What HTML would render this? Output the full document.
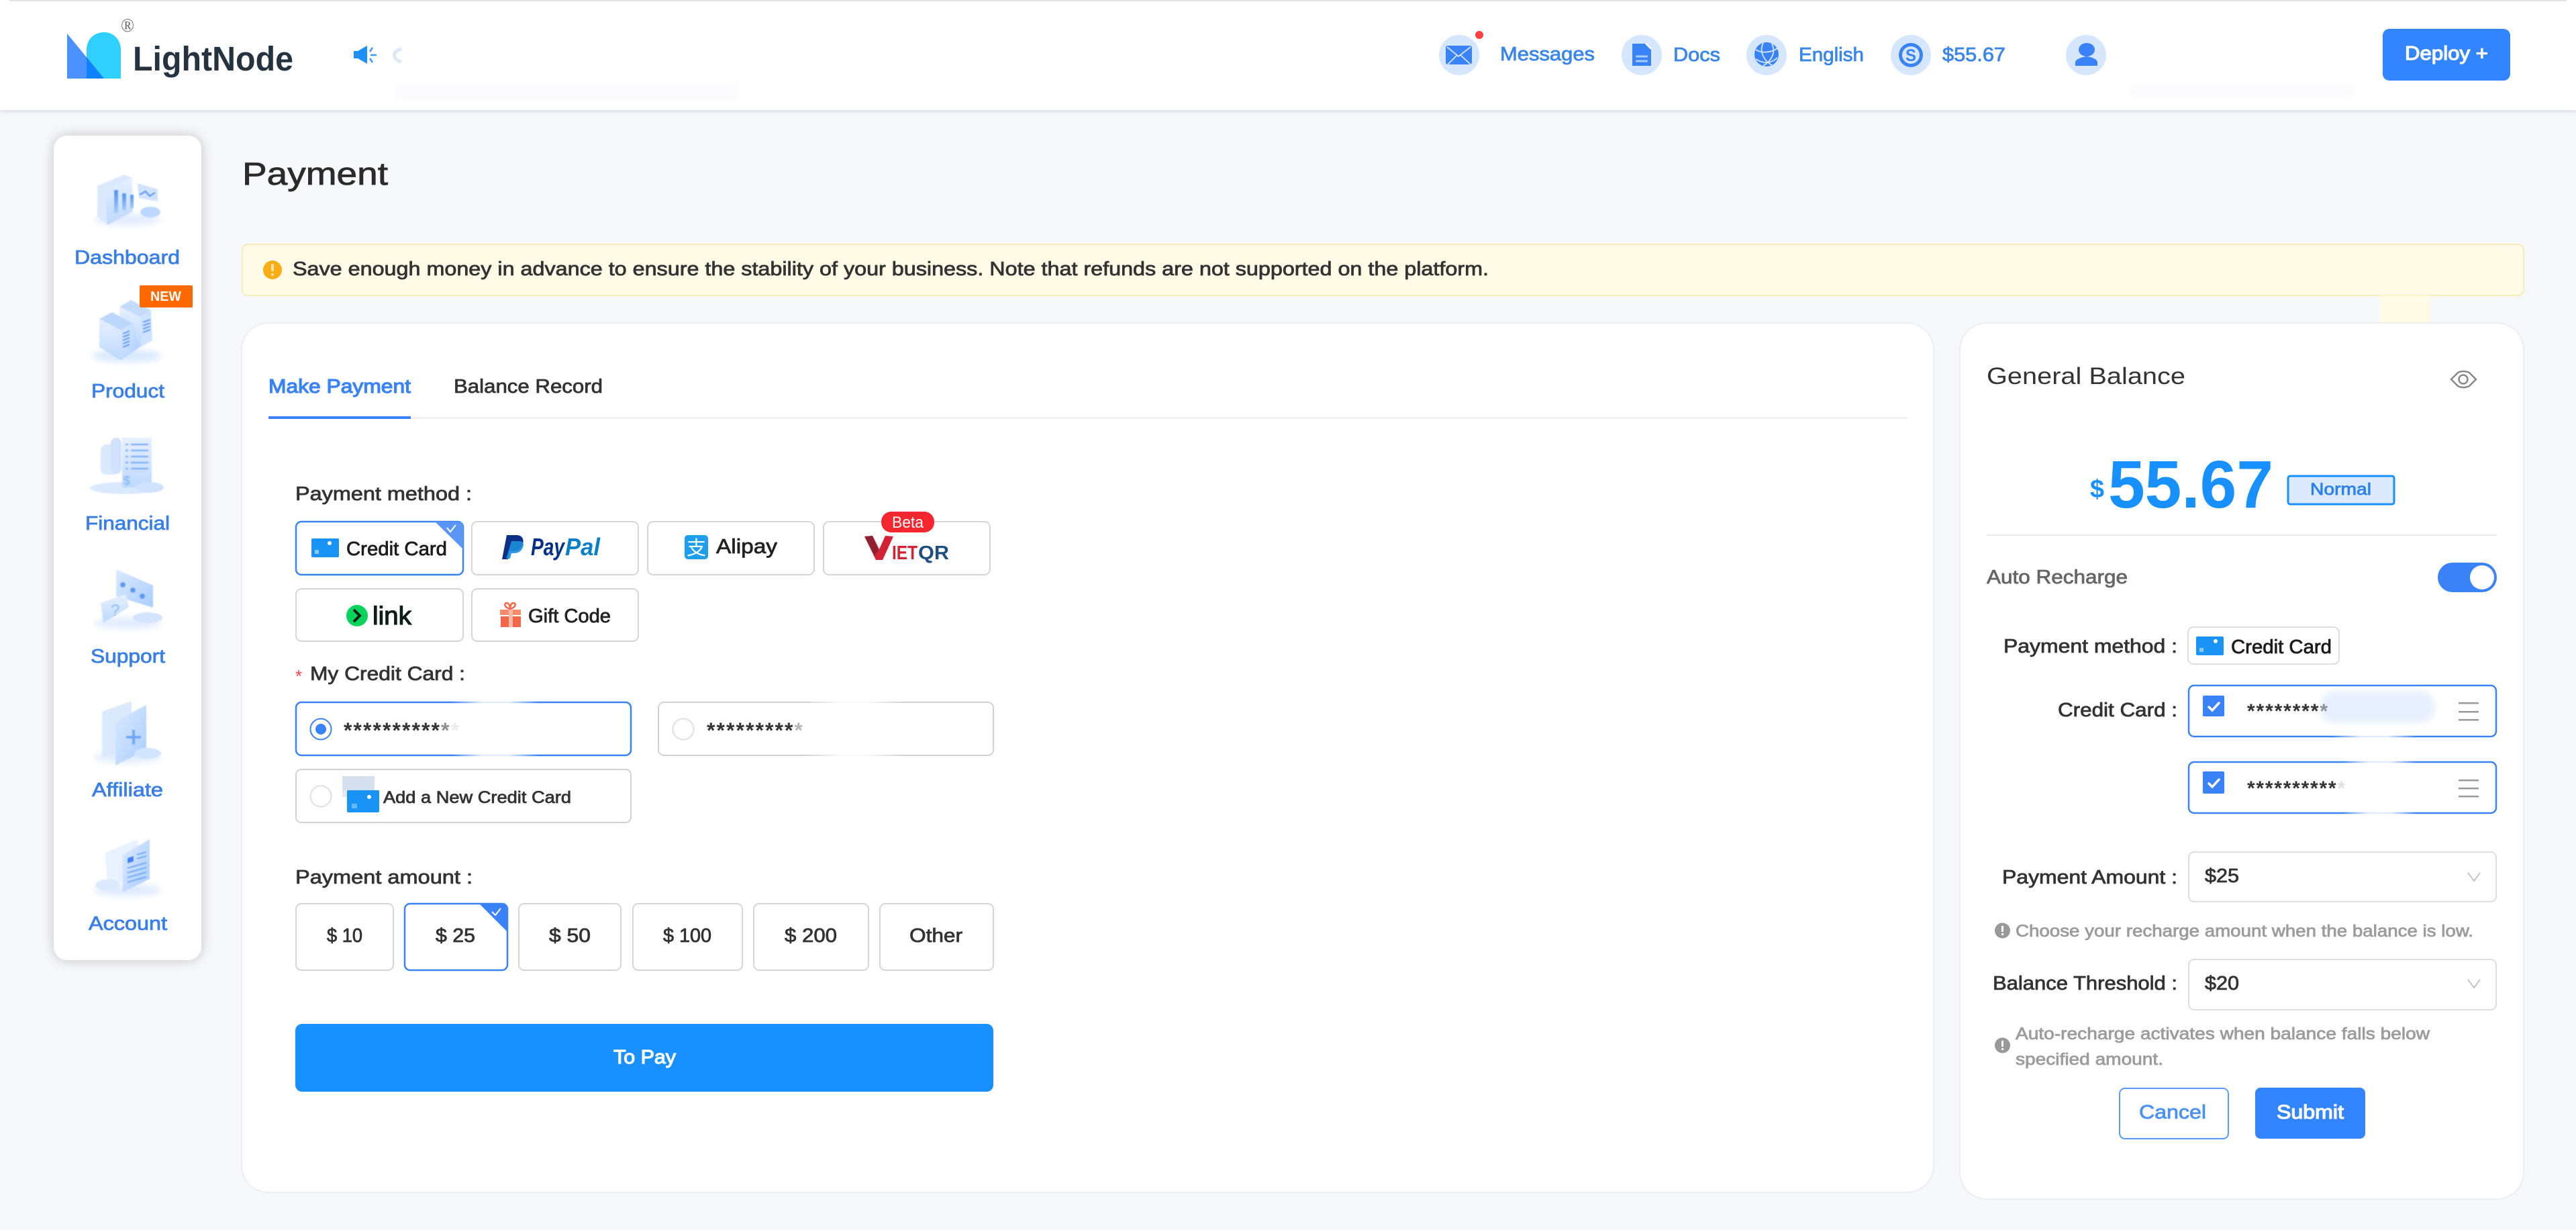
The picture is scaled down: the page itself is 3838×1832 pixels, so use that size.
<!DOCTYPE html>
<html lang="en">
<head>
<meta charset="utf-8">
<title>LightNode Payment</title>
<style>
html,body{margin:0;padding:0;width:3838px;height:1832px;overflow:hidden;background:#f7f8fc}
svg{display:block}
text{font-family:"Liberation Sans","Noto Sans CJK SC",sans-serif}
.m{stroke:currentColor;stroke-width:.8px}
.s{stroke:currentColor;stroke-width:1.2px}
.st{font-weight:700;font-size:32px;fill:#333}
.st2{font-weight:700;font-size:30px;fill:#333}
</style>
</head>
<body>
<svg xmlns="http://www.w3.org/2000/svg" width="3838" height="1832" viewBox="0 0 3838 1832">
<defs>
<linearGradient id="g1" x1="0" y1="0" x2="0" y2="1"><stop offset="0" stop-color="#e6f0ff"/><stop offset="1" stop-color="#bdd8ff"/></linearGradient>
<linearGradient id="g2" x1="0" y1="0" x2="1" y2="1"><stop offset="0" stop-color="#dbeaff"/><stop offset="1" stop-color="#a9cdfe"/></linearGradient>
<linearGradient id="g3" x1="0" y1="0" x2="0" y2="1"><stop offset="0" stop-color="#c2dafd"/><stop offset="1" stop-color="#e9f2ff"/></linearGradient>
<linearGradient id="g4" x1="0" y1="0" x2="0" y2="1"><stop offset="0" stop-color="#4f92f2"/><stop offset="1" stop-color="#a6cbfb"/></linearGradient>
<linearGradient id="mid" x1="0" y1="0" x2="1" y2="0"><stop offset="0" stop-color="#fff" stop-opacity="0"/><stop offset=".35" stop-color="#fff" stop-opacity=".85"/><stop offset=".65" stop-color="#fff" stop-opacity=".85"/><stop offset="1" stop-color="#fff" stop-opacity="0"/></linearGradient>
<filter id="b1" x="-20%" y="-20%" width="140%" height="140%"><feGaussianBlur stdDeviation=".9"/></filter>
<filter id="b5" x="-40%" y="-60%" width="180%" height="220%"><feGaussianBlur stdDeviation="5"/></filter>
<filter id="b8" x="-30%" y="-60%" width="160%" height="220%"><feGaussianBlur stdDeviation="8"/></filter>
<filter id="side" x="-30%" y="-10%" width="160%" height="120%"><feDropShadow dx="0" dy="0" stdDeviation="9" flood-color="#000" flood-opacity=".22"/></filter>
<filter id="hd" x="-2%" y="-10%" width="104%" height="130%"><feDropShadow dx="0" dy="2" stdDeviation="3" flood-color="#9498aa" flood-opacity=".35"/></filter>
</defs>

<rect width="3838" height="1832" fill="#f7f8fc"/>

<!-- header -->
<rect x="0" y="0" width="3838" height="164" fill="#fff" filter="url(#hd)"/>
<rect x="14" y="0" width="3810" height="2" fill="#e4e4e8"/>
<rect x="590" y="124" width="510" height="26" fill="#fbfbfd" filter="url(#b5)"/>
<rect x="3175" y="124" width="330" height="20" fill="#fbfbfd" filter="url(#b5)"/>

<!-- logo -->
<path d="M100 50 L100 117 L155 117 Z" fill="#4b91ff"/>
<path d="M129 85 L129 74 C129 58 141 48 155 48 C170 48 180 60 180 74 L180 117 L155 117 Z" fill="#2fd0ff"/>
<path d="M129 85 L155 117 L129 117 Z" fill="#0f82ff"/>
<text x="180" y="47" font-size="28" fill="#6a6a6a" style="font-family:'Liberation Serif',serif" textLength="20" lengthAdjust="spacingAndGlyphs">®</text>
<text x="198" y="105" font-size="51" font-weight="700" fill="#25323f" textLength="239" lengthAdjust="spacingAndGlyphs">LightNode</text>

<!-- speaker -->
<path d="M527 76 h6 l14 -8 v27 l-14 -8 h-6 z" fill="#1e8fff"/>
<path d="M551 77 l4 -6 M552 82 h9 M551 87 l4 6" stroke="#3a96f5" stroke-width="2.5" fill="none"/>
<path d="M598 73 C584 76 584 89 598 92" stroke="#dbe8f7" stroke-width="5" fill="none"/>

<!-- top nav -->
<circle cx="2174" cy="82" r="30" fill="#d6e6fc"/>
<rect x="2154" y="68" width="39" height="28" rx="3" fill="#3a82f7"/>
<path d="M2156 70 L2173 84 L2191 70 M2157 96 L2171 82 M2191 96 L2176 82" stroke="#d6e6fc" stroke-width="1.8" fill="none"/>
<circle cx="2204" cy="52" r="6" fill="#ff4040"/>
<text x="2235" y="90" font-size="29" fill="#3a86ea" class="m" style="color:#3a86ea" textLength="141" lengthAdjust="spacingAndGlyphs">Messages</text>

<circle cx="2446" cy="82" r="30" fill="#d6e6fc"/>
<path d="M2432 65 h19 l9 9 v24 h-28 z" fill="#3a82f7"/>
<path d="M2452 65 l8 8" stroke="#fff" stroke-width="2"/>
<path d="M2437 84 h18 M2437 91 h18" stroke="#a8c9fb" stroke-width="3"/>
<text x="2493" y="91" font-size="29" fill="#3a86ea" class="m" style="color:#3a86ea" textLength="70" lengthAdjust="spacingAndGlyphs">Docs</text>

<circle cx="2632" cy="82" r="30" fill="#d6e6fc"/>
<circle cx="2632" cy="81" r="18" fill="#3a82f7"/>
<path d="M2616 74 C2625 80 2640 78 2648 72 M2616 88 C2628 96 2640 94 2648 86 M2627 64 C2620 78 2630 92 2640 97 M2640 65 C2646 78 2640 90 2627 98" stroke="#d6e6fc" stroke-width="1.8" fill="none"/>
<text x="2680" y="91" font-size="29" fill="#3a86ea" class="m" style="color:#3a86ea" textLength="97" lengthAdjust="spacingAndGlyphs">English</text>

<circle cx="2847" cy="82" r="30" fill="#d6e6fc"/>
<circle cx="2847" cy="82" r="18" fill="#3a82f7"/>
<circle cx="2847" cy="82" r="13" fill="#d6e6fc"/>
<text x="2839" y="91" font-size="25" font-weight="700" fill="#3a82f7" textLength="16" lengthAdjust="spacingAndGlyphs">S</text>
<text x="2894" y="91" font-size="29" fill="#3a86ea" class="m" style="color:#3a86ea" textLength="94" lengthAdjust="spacingAndGlyphs">$55.67</text>

<circle cx="3108" cy="82" r="30" fill="#d6e6fc"/>
<ellipse cx="3109" cy="74" rx="12" ry="10" fill="#3a82f7"/>
<path d="M3092 98 v-5 c0 -5 10 -8 17 -9 c7 1 16 4 16 9 v5 z" fill="#3a82f7"/>

<rect x="3550" y="43" width="190" height="77" rx="10" fill="#3385ff"/>
<text x="3583" y="89" font-size="29" fill="#fff" class="s" style="color:#fff" textLength="124" lengthAdjust="spacingAndGlyphs">Deploy +</text>

<!-- sidebar -->
<rect x="80" y="202" width="220" height="1228" rx="20" fill="#fff" filter="url(#side)"/>

<!-- dashboard icon -->
<g filter="url(#b1)">
<ellipse cx="190" cy="327" rx="50" ry="8" fill="#dfebff" filter="url(#b5)"/>
<path d="M145 277 L185 260 L197 265 L197 315 L160 335 L145 323 Z" fill="#dbe9fd"/>
<path d="M157 283 L197 265 L198 315 L160 335 Z" fill="url(#g1)"/>
<path d="M173 283 v34" stroke="url(#g4)" stroke-width="6"/>
<rect x="170" y="283" width="6" height="34" fill="url(#g4)"/>
<rect x="182" y="288" width="6" height="25" fill="url(#g4)"/>
<rect x="194" y="290" width="5" height="20" fill="url(#g4)"/>
<path d="M205 273 L235 282 L235 300 L207 295 Z" fill="#d0e3ff"/>
<path d="M208 290 l9 -5 l6 7 l8 -5" stroke="#5b9bf2" stroke-width="2.5" fill="none"/>
<ellipse cx="224" cy="316" rx="15" ry="8" fill="#bcd8ff"/>
</g>
<text x="111" y="393" font-size="29" fill="#3a7fe8" class="m" style="color:#3a7fe8" textLength="157" lengthAdjust="spacingAndGlyphs">Dashboard</text>

<!-- product icon -->
<g filter="url(#b1)">
<ellipse cx="189" cy="530" rx="52" ry="9" fill="#d6e7ff" filter="url(#b5)"/>
<path d="M178 457 L195 447 L225 462 L210 472 Z" fill="#c4dbfc"/>
<path d="M210 472 L225 462 L227 507 L210 517 Z" fill="#cfe2ff"/>
<path d="M178 457 L210 472 L210 517 L178 510 Z" fill="url(#g1)"/>
<path d="M148 475 L167 465 L198 482 L180 492 Z" fill="#bcd7fb"/>
<path d="M148 475 L180 492 L180 537 L148 517 Z" fill="url(#g1)"/>
<path d="M180 492 L198 482 L208 517 L180 537 Z" fill="url(#g2)"/>
<path d="M183 497 l10 -4 M183 502 l10 -4 M183 507 l10 -4 M183 512 l10 -4 M183 517 l10 -4" stroke="#5b9bf2" stroke-width="2.2"/>
<path d="M213 480 l11 -4 M213 485 l11 -4 M213 490 l11 -4 M213 495 l11 -4" stroke="#5b9bf2" stroke-width="2.2"/>
</g>
<rect x="208" y="425" width="79" height="33" rx="2" fill="#ff6a00"/>
<text x="224" y="448" font-size="20" font-weight="700" fill="#fff" textLength="46" lengthAdjust="spacingAndGlyphs">NEW</text>
<text x="136" y="592" font-size="29" fill="#3a7fe8" class="m" style="color:#3a7fe8" textLength="109" lengthAdjust="spacingAndGlyphs">Product</text>

<!-- financial icon -->
<g filter="url(#b1)">
<ellipse cx="186" cy="727" rx="52" ry="9" fill="#dbe9ff"/>
<rect x="150" y="662" width="27" height="45" rx="8" fill="#dbe9fd"/>
<rect x="165" y="652" width="16" height="54" rx="8" fill="#cfe1fb"/>
<rect x="182" y="652" width="44" height="74" fill="url(#g1)"/>
<path d="M187 662 h4 M195 662 h26 M187 671 h4 M195 671 h26 M187 680 h4 M195 680 h26 M187 689 h4 M195 689 h26 M187 698 h4 M195 698 h26" stroke="#7db2f7" stroke-width="2.5"/>
<text x="184" y="722" font-size="18" font-weight="700" fill="#8ab9f7">$</text>
<ellipse cx="222" cy="726" rx="22" ry="8" fill="#cfe2ff"/>
</g>
<text x="127" y="789" font-size="29" fill="#3a7fe8" class="m" style="color:#3a7fe8" textLength="126" lengthAdjust="spacingAndGlyphs">Financial</text>

<!-- support icon -->
<g filter="url(#b1)">
<ellipse cx="190" cy="928" rx="50" ry="8" fill="#dfebff" filter="url(#b5)"/>
<path d="M173 848 L228 872 L228 905 L173 888 Z" fill="url(#g2)"/>
<circle cx="183" cy="871" r="4" fill="#5b9bf2"/><circle cx="198" cy="879" r="4" fill="#5b9bf2"/><circle cx="212" cy="888" r="4" fill="#5b9bf2"/>
<path d="M150 898 L187 885 L192 904 L154 928 Z" fill="url(#g1)"/>
<text x="165" y="917" font-size="24" fill="#8ab9f7">?</text>
<ellipse cx="220" cy="920" rx="22" ry="8" fill="#d3e4ff"/>
</g>
<text x="135" y="987" font-size="29" fill="#3a7fe8" class="m" style="color:#3a7fe8" textLength="111" lengthAdjust="spacingAndGlyphs">Support</text>

<!-- affiliate icon -->
<g filter="url(#b1)">
<ellipse cx="190" cy="1128" rx="50" ry="8" fill="#dfebff" filter="url(#b5)"/>
<path d="M152 1060 L196 1044 L196 1123 L152 1127 Z" fill="#dbe9fd"/>
<path d="M172 1074 L218 1050 L218 1117 L172 1140 Z" fill="url(#g2)"/>
<path d="M188 1098 h22 M199 1087 v22" stroke="#6da8f6" stroke-width="4"/>
<ellipse cx="220" cy="1122" rx="20" ry="8" fill="#d3e4ff"/>
</g>
<text x="137" y="1186" font-size="29" fill="#3a7fe8" class="m" style="color:#3a7fe8" textLength="106" lengthAdjust="spacingAndGlyphs">Affiliate</text>

<!-- account icon -->
<g filter="url(#b1)">
<ellipse cx="190" cy="1326" rx="50" ry="8" fill="#dbe9ff" filter="url(#b5)"/>
<path d="M157 1270 L205 1250 L205 1310 L160 1318 Z" fill="#e8f1ff"/>
<ellipse cx="160" cy="1318" rx="18" ry="8" fill="#dbe9ff"/>
<path d="M183 1273 L223 1250 L223 1309 L183 1329 Z" fill="url(#g2)"/>
<path d="M190 1278 l9 -3 v8 l-9 3 z" fill="#3a82f7"/>
<path d="M204 1273 l14 -4 M204 1279 l14 -4 M190 1293 l28 -8 M190 1300 l28 -8 M190 1307 l28 -8 M190 1314 l28 -8" stroke="#6da8f6" stroke-width="2"/>
</g>
<text x="132" y="1385" font-size="29" fill="#3a7fe8" class="m" style="color:#3a7fe8" textLength="117" lengthAdjust="spacingAndGlyphs">Account</text>

<!-- title -->
<text x="361" y="275" font-size="47" fill="#2b2b2b" class="m" style="color:#2b2b2b" textLength="217" lengthAdjust="spacingAndGlyphs">Payment</text>

<!-- notice -->
<rect x="361" y="364" width="3399" height="76" rx="8" fill="#fffbe6" stroke="#f7ecb8" stroke-width="2"/>
<circle cx="406" cy="402" r="14" fill="#faad14"/>
<rect x="404" y="393" width="4" height="11" rx="1" fill="#ffe3a6"/><circle cx="406" cy="409" r="2" fill="#ffe3a6"/>
<text x="436" y="410" font-size="29" fill="#333" class="m" style="color:#333" textLength="1782" lengthAdjust="spacingAndGlyphs">Save enough money in advance to ensure the stability of your business. Note that refunds are not supported on the platform.</text>

<!-- left card -->
<rect x="360" y="481" width="2521" height="1295" rx="40" fill="#fff" stroke="#eceef2" stroke-width="2"/>
<text x="400" y="585" font-size="29" fill="#3a82f7" class="s" style="color:#3a82f7" textLength="212" lengthAdjust="spacingAndGlyphs">Make Payment</text>
<text x="676" y="585" font-size="29" fill="#333" class="m" style="color:#333" textLength="222" lengthAdjust="spacingAndGlyphs">Balance Record</text>
<rect x="612" y="621" width="2230" height="3" fill="#f1f1f3"/>
<rect x="400" y="620" width="212" height="4" fill="#3a82f7"/>

<text x="440" y="745" font-size="29" fill="#333" class="m" style="color:#333" textLength="263" lengthAdjust="spacingAndGlyphs">Payment method :</text>

<!-- payment buttons -->
<rect x="441" y="777" width="249" height="79" rx="8" fill="#fff" stroke="#3a82f7" stroke-width="2.5"/>
<path d="M648 777 L682 777 Q690 777 690 785 L690 818 Z" fill="#5b95f6"/>
<path d="M666 786 l5 6 l8 -10" stroke="#fff" stroke-width="2" fill="none"/>
<rect x="464" y="802" width="41" height="28" rx="2" fill="#1a93f7"/>
<circle cx="491" cy="809" r="3" fill="#fff"/><rect x="469" y="819" width="6" height="6" fill="#8cc8fb"/>
<text x="516" y="827" font-size="29" fill="#1c1c1c" class="m" style="color:#1c1c1c" textLength="150" lengthAdjust="spacingAndGlyphs">Credit Card</text>

<rect x="703" y="777" width="248" height="79" rx="8" fill="#fff" stroke="#d6d6d6" stroke-width="2"/>
<path d="M755 797 h14 c9 0 12 6 10 13 c-2 8 -8 11 -16 11 h-4 l-2 12 h-9 z" fill="#0b2f87"/>
<path d="M762 806 h12 c6 0 7 5 5 9 c-2 6 -7 9 -13 9 h-4 l-2 8 h-6 z" fill="#1c8fdb" opacity=".9"/>
<text x="791" y="827" font-size="36" font-weight="700" font-style="italic" fill="#003087" textLength="50" lengthAdjust="spacingAndGlyphs">Pay</text>
<text x="842" y="827" font-size="36" font-weight="700" font-style="italic" fill="#0a7fc9" textLength="52" lengthAdjust="spacingAndGlyphs">Pal</text>

<rect x="965" y="777" width="248" height="79" rx="8" fill="#fff" stroke="#d6d6d6" stroke-width="2"/>
<rect x="1020" y="797" width="35" height="36" rx="5" fill="#1e9fee"/>
<text x="1023" y="826" font-size="29" fill="#fff" textLength="29" lengthAdjust="spacingAndGlyphs">支</text>
<text x="1067" y="824" font-size="31" fill="#222" class="m" style="color:#222" textLength="91" lengthAdjust="spacingAndGlyphs">Alipay</text>

<rect x="1227" y="777" width="248" height="79" rx="8" fill="#fff" stroke="#d6d6d6" stroke-width="2"/>
<path d="M1288 799 L1300 798 L1310 818 L1319 798 L1331 799 L1315 834 L1305 834 Z" fill="#d32233"/>
<path d="M1288 799 L1300 798 L1309 820 L1303 828 Z" fill="#8e2230"/>
<text x="1329" y="833" font-size="29" font-weight="700" fill="#d32233" textLength="38" lengthAdjust="spacingAndGlyphs">IET</text>
<text x="1368" y="833" font-size="29" font-weight="700" fill="#1f4f80" textLength="46" lengthAdjust="spacingAndGlyphs">QR</text>
<rect x="1313" y="762" width="79" height="31" rx="15" fill="#f5262e"/>
<text x="1329" y="786" font-size="24" fill="#fff" textLength="47" lengthAdjust="spacingAndGlyphs">Beta</text>

<rect x="441" y="877" width="249" height="78" rx="8" fill="#fff" stroke="#d6d6d6" stroke-width="2"/>
<circle cx="532" cy="917" r="16" fill="#08d35c"/>
<path d="M527 908 l9 9 l-9 9" stroke="#0b1f14" stroke-width="4" fill="none"/>
<text x="555" y="930" font-size="38" fill="#0c1f17" class="s" style="color:#0c1f17" textLength="58" lengthAdjust="spacingAndGlyphs">link</text>

<rect x="703" y="877" width="248" height="78" rx="8" fill="#fff" stroke="#d6d6d6" stroke-width="2"/>
<rect x="746" y="918" width="30" height="16" fill="#f4664a"/><rect x="745" y="908" width="31" height="8" fill="#f98a6b"/>
<rect x="758" y="908" width="6" height="26" fill="#fbb9a6"/>
<path d="M760 907 c-8 -2 -10 -8 -5 -9 c3 0 5 4 5 9 c0 -5 2 -9 5 -9 c5 1 3 7 -5 9" stroke="#f4664a" stroke-width="2.5" fill="none"/>
<text x="787" y="927" font-size="29" fill="#222" class="m" style="color:#222" textLength="123" lengthAdjust="spacingAndGlyphs">Gift Code</text>

<!-- my credit card -->
<text x="440" y="1016" font-size="26" fill="#f5484a">*</text>
<text x="462" y="1013" font-size="29" fill="#333" class="m" style="color:#333" textLength="231" lengthAdjust="spacingAndGlyphs">My Credit Card :</text>

<rect x="441" y="1046" width="499" height="79" rx="8" fill="#fff" stroke="#3a82f7" stroke-width="2.5"/>
<rect x="673" y="1043" width="130" height="6" fill="url(#mid)"/><rect x="673" y="1122" width="130" height="6" fill="url(#mid)"/>
<circle cx="478" cy="1086" r="15.500" fill="#fff" stroke="#3a82f7" stroke-width="2"/>
<circle cx="478" cy="1086" r="8" fill="#3a82f7"/>
<text x="512" y="1099" class="st" textLength="172" lengthAdjust="spacing">**********<tspan fill-opacity=".55">*</tspan><tspan fill-opacity=".1">*</tspan></text>

<rect x="981" y="1046" width="499" height="79" rx="8" fill="#fff" stroke="#d2d2d2" stroke-width="2"/>
<rect x="1200" y="1043" width="145" height="6" fill="url(#mid)"/><rect x="1200" y="1122" width="145" height="6" fill="url(#mid)"/>
<circle cx="1018" cy="1086" r="15.500" fill="#fff" stroke="#e0e0e0" stroke-width="2"/>
<text x="1053" y="1099" class="st" textLength="143" lengthAdjust="spacing">*********<tspan fill-opacity=".35">*</tspan></text>

<rect x="441" y="1146" width="499" height="79" rx="8" fill="#fff" stroke="#d2d2d2" stroke-width="2"/>
<circle cx="478" cy="1186" r="15.500" fill="#fff" stroke="#e0e0e0" stroke-width="2"/>
<rect x="510" y="1156" width="48" height="21" fill="#d5dfed"/>
<rect x="510" y="1177" width="8" height="10" fill="#e3eaf3"/>
<rect x="517" y="1177" width="48" height="33" rx="2" fill="#1a93f7"/>
<circle cx="550" cy="1187" r="3" fill="#fff"/><rect x="524" y="1197" width="8" height="7" fill="#66b7fa"/>
<text x="571" y="1196" font-size="25" fill="#333" class="m" style="color:#333" textLength="280" lengthAdjust="spacingAndGlyphs">Add a New Credit Card</text>

<!-- amount -->
<text x="440" y="1316" font-size="29" fill="#333" class="m" style="color:#333" textLength="264" lengthAdjust="spacingAndGlyphs">Payment amount :</text>

<rect x="441" y="1346" width="145" height="99" rx="8" fill="#fff" stroke="#d6d6d6" stroke-width="2"/>
<text x="487" y="1403" font-size="29" fill="#333" class="m" style="color:#333" textLength="53" lengthAdjust="spacingAndGlyphs">$ 10</text>
<rect x="603" y="1346" width="153" height="99" rx="8" fill="#fff" stroke="#3a82f7" stroke-width="2.5"/>
<path d="M714 1346 L748 1346 Q756 1346 756 1354 L756 1388 Z" fill="#3a82f7"/>
<path d="M733 1358 l5 5 l8 -10" stroke="#fff" stroke-width="2" fill="none"/>
<text x="649" y="1403" font-size="29" fill="#333" class="m" style="color:#333" textLength="59" lengthAdjust="spacingAndGlyphs">$ 25</text>
<rect x="773" y="1346" width="152" height="99" rx="8" fill="#fff" stroke="#d6d6d6" stroke-width="2"/>
<text x="818" y="1403" font-size="29" fill="#333" class="m" style="color:#333" textLength="62" lengthAdjust="spacingAndGlyphs">$ 50</text>
<rect x="943" y="1346" width="163" height="99" rx="8" fill="#fff" stroke="#d6d6d6" stroke-width="2"/>
<text x="988" y="1403" font-size="29" fill="#333" class="m" style="color:#333" textLength="72" lengthAdjust="spacingAndGlyphs">$ 100</text>
<rect x="1123" y="1346" width="171" height="99" rx="8" fill="#fff" stroke="#d6d6d6" stroke-width="2"/>
<text x="1169" y="1403" font-size="29" fill="#333" class="m" style="color:#333" textLength="78" lengthAdjust="spacingAndGlyphs">$ 200</text>
<rect x="1311" y="1346" width="169" height="99" rx="8" fill="#fff" stroke="#d6d6d6" stroke-width="2"/>
<text x="1355" y="1403" font-size="29" fill="#333" class="m" style="color:#333" textLength="79" lengthAdjust="spacingAndGlyphs">Other</text>

<rect x="440" y="1525" width="1040" height="101" rx="10" fill="#1890ff"/>
<text x="914" y="1584" font-size="29" fill="#fff" class="s" style="color:#fff" textLength="93" lengthAdjust="spacingAndGlyphs">To Pay</text>

<!-- right card -->
<rect x="3546" y="440" width="74" height="42" fill="#fffbe6" filter="url(#b1)"/>
<rect x="2920" y="481" width="840" height="1305" rx="40" fill="#fff" stroke="#eceef2" stroke-width="2"/>
<text x="2960" y="572" font-size="35" fill="#333" textLength="296" lengthAdjust="spacingAndGlyphs">General Balance</text>
<path d="M3652 565 L3662 555 Q3670 551 3679 555 L3689 565 L3679 575 Q3670 579 3662 575 Z" fill="none" stroke="#888" stroke-width="2.5"/>
<circle cx="3670" cy="565" r="6.500" fill="none" stroke="#888" stroke-width="2.5"/>

<text x="3114" y="741" font-size="38" font-weight="700" fill="#1890ff" textLength="21" lengthAdjust="spacingAndGlyphs">$</text>
<text x="3141" y="756" font-size="100" font-weight="700" fill="#1890ff" textLength="246" lengthAdjust="spacingAndGlyphs">55.67</text>
<rect x="3409" y="709" width="158" height="42" rx="3" fill="#dbeafe" stroke="#1890ff" stroke-width="3"/>
<text x="3442" y="737" font-size="25" fill="#2b82f0" class="m" style="color:#2b82f0" textLength="91" lengthAdjust="spacingAndGlyphs">Normal</text>
<rect x="2960" y="796" width="760" height="2" fill="#e8e8e8"/>

<text x="2960" y="869" font-size="29" fill="#666" class="m" style="color:#666" textLength="210" lengthAdjust="spacingAndGlyphs">Auto Recharge</text>
<rect x="3632" y="838" width="88" height="44" rx="22" fill="#3a82f7"/>
<circle cx="3698" cy="860" r="18" fill="#fff"/>

<text x="2985" y="972" font-size="29" fill="#333" class="m" style="color:#333" textLength="259" lengthAdjust="spacingAndGlyphs">Payment method :</text>
<rect x="3260" y="934" width="225" height="55" rx="8" fill="#fff" stroke="#dedede" stroke-width="2"/>
<rect x="3272" y="948" width="41" height="28" rx="2" fill="#1a93f7"/>
<circle cx="3301" cy="955" r="3" fill="#fff"/><rect x="3277" y="965" width="6" height="6" fill="#8cc8fb"/>
<text x="3324" y="973" font-size="29" fill="#1c1c1c" class="m" style="color:#1c1c1c" textLength="150" lengthAdjust="spacingAndGlyphs">Credit Card</text>

<text x="3066" y="1067" font-size="29" fill="#333" class="m" style="color:#333" textLength="178" lengthAdjust="spacingAndGlyphs">Credit Card :</text>
<rect x="3261" y="1021" width="458" height="76" rx="8" fill="#fff" stroke="#3a82f7" stroke-width="2.5"/>
<rect x="3474" y="1094" width="126" height="6" fill="url(#mid)"/>
<rect x="3457" y="1030" width="170" height="46" rx="20" fill="#e6effd" filter="url(#b5)"/>
<rect x="3282" y="1036" width="32" height="31" rx="2" fill="#3a82f7"/>
<path d="M3290 1052 l6 6 l11 -12" stroke="#fff" stroke-width="3.500" fill="none"/>
<text x="3348" y="1069" class="st2" textLength="120" lengthAdjust="spacing">********<tspan fill-opacity=".5">*</tspan></text>
<rect x="3663" y="1046" width="30" height="2.500" fill="#999"/><rect x="3663" y="1059" width="30" height="2.500" fill="#999"/><rect x="3663" y="1071" width="30" height="2.500" fill="#999"/>

<rect x="3261" y="1135" width="458" height="76" rx="8" fill="#fff" stroke="#3a82f7" stroke-width="2.5"/>
<rect x="3490" y="1132" width="110" height="6" fill="url(#mid)"/><rect x="3490" y="1208" width="110" height="6" fill="url(#mid)"/>
<rect x="3282" y="1149" width="32" height="33" rx="2" fill="#3a82f7"/>
<path d="M3290 1166 l6 6 l11 -12" stroke="#fff" stroke-width="3.500" fill="none"/>
<text x="3348" y="1184" class="st2" textLength="146" lengthAdjust="spacing">**********<tspan fill-opacity=".15">*</tspan></text>
<rect x="3663" y="1161" width="30" height="2.500" fill="#999"/><rect x="3663" y="1173" width="30" height="2.500" fill="#999"/><rect x="3663" y="1185" width="30" height="2.500" fill="#999"/>

<text x="2983" y="1316" font-size="29" fill="#333" class="m" style="color:#333" textLength="261" lengthAdjust="spacingAndGlyphs">Payment Amount :</text>
<rect x="3261" y="1269" width="458" height="74" rx="8" fill="#fff" stroke="#dedede" stroke-width="2"/>
<text x="3285" y="1314" font-size="29" fill="#333" class="m" style="color:#333" textLength="51" lengthAdjust="spacingAndGlyphs">$25</text>
<path d="M3677 1300 l9 12 l9 -12" stroke="#c4c4c4" stroke-width="2" fill="none"/>

<circle cx="2983.500" cy="1386" r="11.500" fill="#999"/>
<rect x="2982" y="1379" width="3" height="9" fill="#fff"/><rect x="2982" y="1390" width="3" height="3" fill="#fff"/>
<text x="3003" y="1395" font-size="25" fill="#9c9c9c" class="m" style="color:#9c9c9c" textLength="682" lengthAdjust="spacingAndGlyphs">Choose your recharge amount when the balance is low.</text>

<text x="2969" y="1474" font-size="29" fill="#333" class="m" style="color:#333" textLength="275" lengthAdjust="spacingAndGlyphs">Balance Threshold :</text>
<rect x="3261" y="1429" width="458" height="75" rx="8" fill="#fff" stroke="#dedede" stroke-width="2"/>
<text x="3285" y="1474" font-size="29" fill="#333" class="m" style="color:#333" textLength="51" lengthAdjust="spacingAndGlyphs">$20</text>
<path d="M3677 1459 l9 12 l9 -12" stroke="#c4c4c4" stroke-width="2" fill="none"/>

<circle cx="2983.500" cy="1557" r="11.500" fill="#999"/>
<rect x="2982" y="1550" width="3" height="9" fill="#fff"/><rect x="2982" y="1561" width="3" height="3" fill="#fff"/>
<text x="3003" y="1548" font-size="25" fill="#9c9c9c" class="m" style="color:#9c9c9c" textLength="617" lengthAdjust="spacingAndGlyphs">Auto-recharge activates when balance falls below</text>
<text x="3003" y="1586" font-size="25" fill="#9c9c9c" class="m" style="color:#9c9c9c" textLength="220" lengthAdjust="spacingAndGlyphs">specified amount.</text>

<rect x="3158" y="1621" width="162" height="75" rx="8" fill="#fff" stroke="#5a9cf8" stroke-width="2"/>
<text x="3187" y="1666" font-size="29" fill="#4a90f5" class="m" style="color:#4a90f5" textLength="100" lengthAdjust="spacingAndGlyphs">Cancel</text>
<rect x="3360" y="1620" width="164" height="76" rx="8" fill="#3385ff"/>
<text x="3392" y="1666" font-size="29" fill="#fff" class="s" style="color:#fff" textLength="100" lengthAdjust="spacingAndGlyphs">Submit</text>
</svg>
</body>
</html>
